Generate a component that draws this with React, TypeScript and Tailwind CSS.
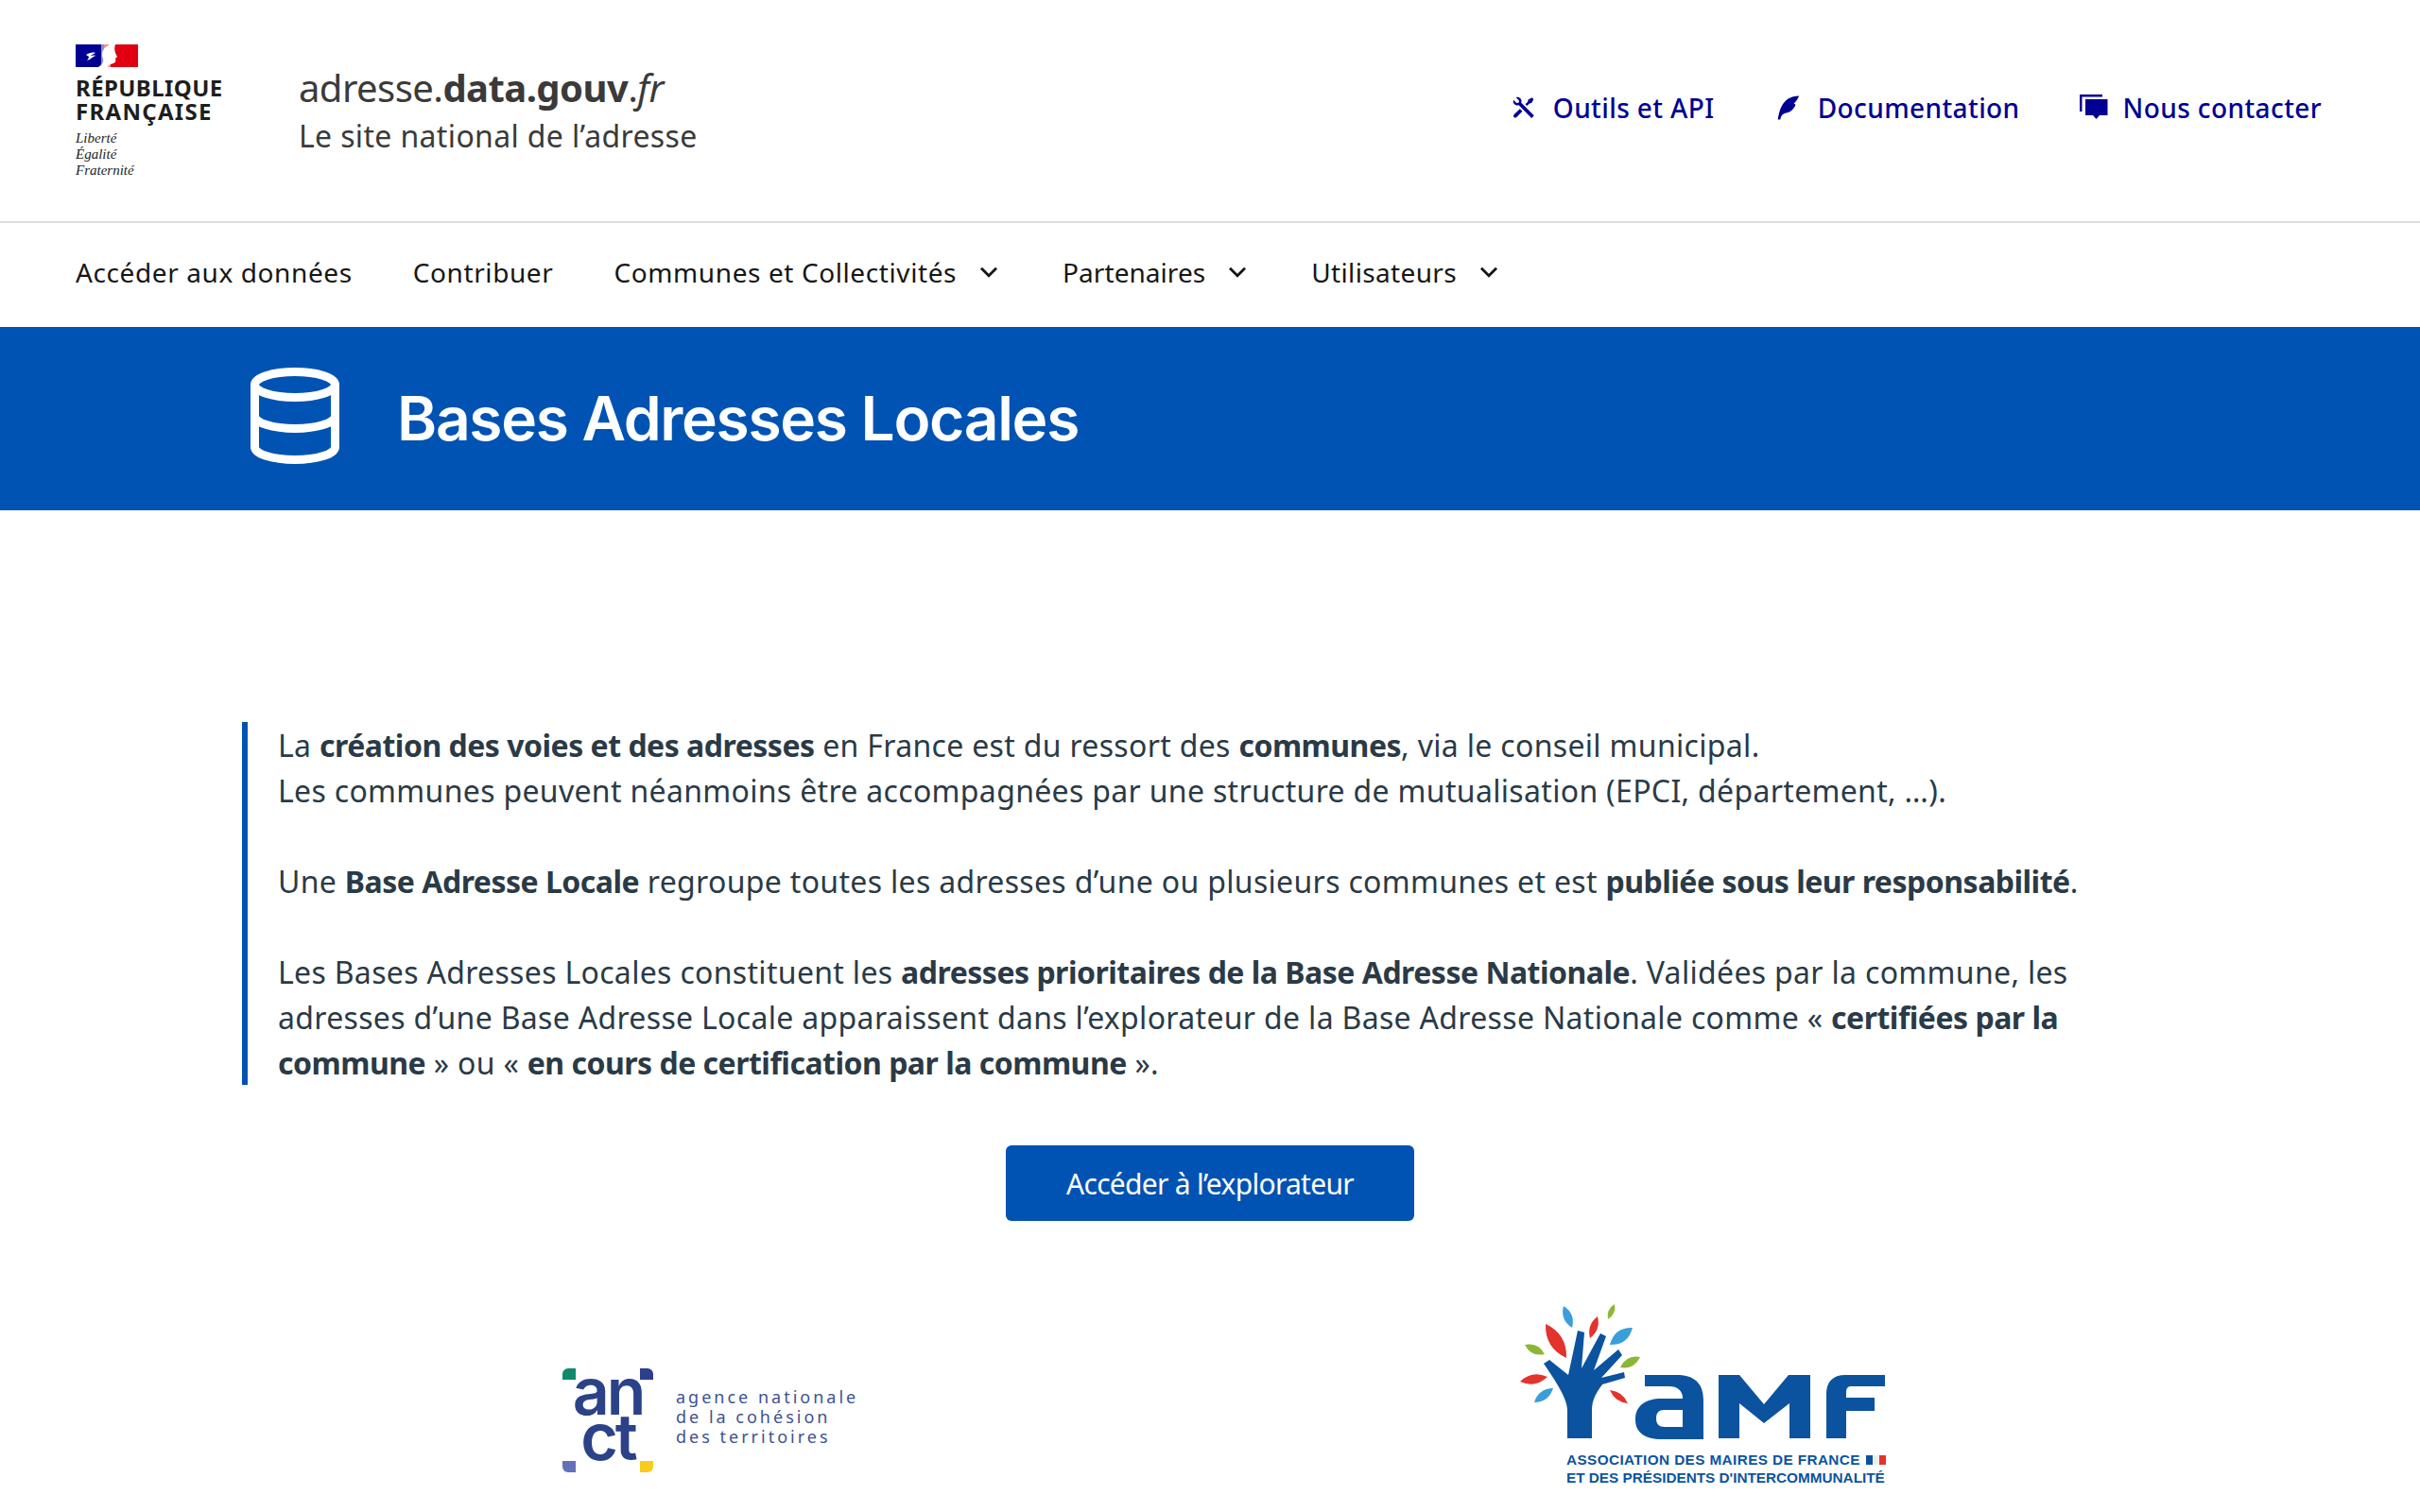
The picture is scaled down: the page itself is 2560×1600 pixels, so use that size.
import React from 'react';
import { RiToolsFill, RiQuillPenFill, RiArrowDownSLine } from 'react-icons/ri';

function FranceLogo() {
    return (
        <div className="mt-[2px] flex w-[160px] flex-col">
            <svg className="h-6 w-[66px]" viewBox="0 0 66 24">
                <rect width="66" height="24" fill="#e1000f" />
                <rect width="30" height="24" fill="#000091" />
                {/* white bust between the two colours */}
                <path d="M24 24c4-3 6-5 5-9-2-4-1-10 4-13l3-2h6c-1 3-1 6 0 9l2 4-2 2c1 3 0 4-2 5l-3 1c-1 1-3 1-3 3z" fill="#fff" />
                <path d="M27 0h10v24h-10z" fill="#fff" opacity="0.55" />
                <path d="M11 11c3-2 7-3 10-2-2 1-4 2-5 3 2 0 4-1 5 0-3 1-5 4-9 5 1-1 2-3 2-4z" fill="#fff" />
            </svg>
            <div className="mt-[9px] font-['Noto_Sans',sans-serif] text-[24px] leading-[25px] font-bold text-[#1e1e1e]">
                <div className="tracking-[0.4px]">RÉPUBLIQUE</div>
                <div className="tracking-[1.3px]">FRANÇAISE</div>
            </div>
            <div className="mt-[8px] font-['Liberation_Serif',serif] text-[15px] leading-[17px] italic text-[#1e1e1e]">
                Liberté
                <br />
                Égalité
                <br />
                Fraternité
            </div>
        </div>
    );
}

function ChatIcon() {
    return (
        <svg className="h-[30px] w-[30px]" viewBox="0 0 30 30" fill="#000091">
            <path d="M0 1h24v2.5H2.5V19H0z" />
            <path d="M6 6h23.5v17H21l-3.5 4-3.5-4H6z" />
        </svg>
    );
}

function DatabaseIcon() {
    return (
        <svg className="mb-[6px] h-[102px] w-[94px]" viewBox="0 0 94 102" fill="none" stroke="#fff" strokeWidth="9">
            <ellipse cx="47" cy="18" rx="42.5" ry="13.5" />
            <path d="M4.5 18v66c0 7.5 19 13.5 42.5 13.5s42.5-6 42.5-13.5V18" />
            <path d="M4.5 51c0 7.5 19 13.5 42.5 13.5s42.5-6 42.5-13.5" />
        </svg>
    );
}

function TopLink({ icon, label }: { icon: React.ReactNode; label: string }) {
    return (
        <a className="flex items-center gap-[16px] text-[28px] font-medium tracking-[0.4px] text-[#000091]">
            {icon}
            {label}
        </a>
    );
}

function NavItem({ label, caret, className }: { label: string; caret?: boolean; className: string }) {
    return (
        <a className={`flex items-center gap-[17px] text-[28px] text-[#161616] ${className}`}>
            {label}
            {caret && <RiArrowDownSLine className="-mr-[3px] h-[34px] w-[34px]" />}
        </a>
    );
}

function AnctLogo() {
    return (
        <div className="flex w-[313px] items-center gap-[24px]">
            <div className="relative h-[110px] w-[96px] shrink-0">
                <span className="absolute top-0 left-0 h-[12px] w-[14px] rounded-tl-[6px] bg-[#0f8a6e]" />
                <span className="absolute top-0 right-0 h-[12px] w-[14px] rounded-tr-[6px] bg-[#2b3f8c]" />
                <span className="absolute bottom-0 left-0 h-[12px] w-[14px] rounded-bl-[6px] bg-[#6471b8]" />
                <span className="absolute right-0 bottom-0 h-[12px] w-[14px] rounded-br-[6px] bg-[#f7cc1d]" />
                <div className="absolute inset-x-0 top-0 text-center font-['Inter',sans-serif] text-[68px] leading-[48px] font-semibold tracking-[-3px] text-[#2b4288]">
                    an
                    <br />
                    ct
                </div>
            </div>
            <div className="mb-[8px] font-['Noto_Sans',sans-serif] text-[18px] leading-[21px] tracking-[3px] whitespace-nowrap text-[#3e5290]">
                agence nationale
                <br />
                de la cohésion
                <br />
                des territoires
            </div>
        </div>
    );
}

// leaf shape between two tips, w = bulge on each side
function leaf(x1: number, y1: number, x2: number, y2: number, w: number) {
    const mx = (x1 + x2) / 2;
    const my = (y1 + y2) / 2;
    const dx = x2 - x1;
    const dy = y2 - y1;
    const len = Math.hypot(dx, dy);
    const nx = (-dy / len) * w;
    const ny = (dx / len) * w;
    return `M${x1} ${y1}Q${mx + nx} ${my + ny} ${x2} ${y2}Q${mx - nx} ${my - ny} ${x1} ${y1}Z`;
}

function AmfLogo() {
    const leaves: [number, number, number, number, number, string][] = [
        [46, 2, 55, 25, 9, '#3a9fd9'],
        [100, 0, 93, 16, 6, '#8ab834'],
        [27, 21, 49, 57, 14, '#e2332c'],
        [82, 13, 74, 36, 8, '#e2332c'],
        [119, 25, 95, 43, 12, '#3a9fd9'],
        [5, 43, 26, 53, 9, '#8ab834'],
        [127, 56, 106, 67, 9, '#8ab834'],
        [0, 82, 29, 77, 10, '#e2332c'],
        [35, 89, 15, 104, 9, '#3a9fd9'],
        [95, 91, 114, 105, 7, '#e2332c'],
    ];
    return (
        <div className="relative h-[188px] w-[386px]">
            <svg className="absolute top-0 left-0 h-[148px] w-[386px]" viewBox="0 0 386 148" fill="#0b539f">
                {leaves.map(([x1, y1, x2, y2, w, c]) => (
                    <path key={`${x1}-${y1}`} d={leaf(x1, y1, x2, y2, w)} fill={c} />
                ))}
                <path d="M25 63L31 59L51 75L61 28L68 30L65 68L85 31L91 34L78 70L104 48L108 54L86 78L110 72L111 78L87 85C82 92 76 100 76 112V142H50V112C50 100 38 82 25 63Z" />
                <path
                    fillRule="evenodd"
                    d="M132 75H166C185 75 194 84 194 102V143H150C132 143 122 136 122 122C122 108 132 100 150 100H172C172 91 166 87 158 87H132ZM172 112H152C146 112 144 116 144 121C144 127 147 130 153 130H172Z"
                />
                <path d="M210 75H232L258 106L284 75H307V142H285V105L258 126L232 105V142H210Z" />
                <path d="M324 142V95C324 82 331 75 344 75H386V87H350C346 87 345 90 345 94V99H375V113H345V142Z" />
            </svg>
            <div className="absolute top-[155px] left-[49px] font-['Liberation_Sans',sans-serif] text-[15.3px] leading-[19px] font-bold whitespace-nowrap text-[#0b539f]">
                <div className="flex items-center gap-[6px] tracking-[0.4px]">
                    ASSOCIATION DES MAIRES DE FRANCE
                    <span className="flex">
                        <span className="h-[10px] w-[7px] bg-[#0b539f]" />
                        <span className="h-[10px] w-[7px] bg-[#eee]" />
                        <span className="h-[10px] w-[7px] bg-[#e2332c]" />
                    </span>
                </div>
                <div>ET DES PRÉSIDENTS D'INTERCOMMUNALITÉ</div>
            </div>
        </div>
    );
}

function Strong({ children }: { children: React.ReactNode }) {
    return <b className="tracking-[-0.5px]">{children}</b>;
}

export default function App() {
    return (
        <div className="h-[1600px] overflow-hidden bg-white font-['Noto_Sans',sans-serif]">
            <header className="flex h-[236px] items-center justify-between border-b-2 border-[#dddddd] pr-[104px] pl-[80px]">
                <div className="flex items-center">
                    <FranceLogo />
                    <div className="ml-[76px] text-[#3a3a3a]">
                        <div className="text-[40px] leading-[52px] tracking-[-0.57px]">
                            adresse.<b>data.gouv</b>.<i>fr</i>
                        </div>
                        <div className="mt-[1px] text-[32px] leading-[48px] tracking-[0.35px]">Le site national de l’adresse</div>
                    </div>
                </div>
                <nav className="flex items-center gap-[63px] pb-[6px]">
                    <TopLink icon={<RiToolsFill className="h-[30px] w-[30px]" />} label="Outils et API" />
                    <TopLink icon={<RiQuillPenFill className="h-[30px] w-[30px]" />} label="Documentation" />
                    <TopLink icon={<ChatIcon />} label="Nous contacter" />
                </nav>
            </header>

            <nav className="flex h-[110px] items-center gap-[64px] pb-[6px] pl-[80px]">
                <NavItem label="Accéder aux données" className="tracking-[0.6px]" />
                <NavItem label="Contribuer" className="tracking-[0.6px]" />
                <NavItem label="Communes et Collectivités" caret className="tracking-[0.6px]" />
                <NavItem label="Partenaires" caret className="tracking-[0.05px]" />
                <NavItem label="Utilisateurs" caret className="tracking-[0.35px]" />
            </nav>

            <div className="flex h-[194px] items-center gap-[61px] bg-[#0053b3] pl-[265px]">
                <DatabaseIcon />
                <h1 className="font-['Inter',sans-serif] text-[64px] font-semibold tracking-[-1.3px] text-white">
                    Bases Adresses Locales
                </h1>
            </div>

            <main className="px-[256px] pt-[224px]">
                <blockquote className="h-[384px] border-l-[6px] border-[#0053b3] pt-[1px] pl-[32px] text-[32px] leading-[48px] tracking-[0.32px] text-[#2a3a47]">
                    La <Strong>création des voies et des adresses</Strong> en France est du ressort des <Strong>communes</Strong>, via le conseil municipal.
                    <br />
                    Les communes peuvent néanmoins être accompagnées par une structure de mutualisation (EPCI, département, …).
                    <br />
                    <br />
                    Une <Strong>Base Adresse Locale</Strong> regroupe toutes les adresses d’une ou plusieurs communes et est <Strong>publiée sous leur responsabilité</Strong>.
                    <br />
                    <br />
                    Les Bases Adresses Locales constituent les <Strong>adresses prioritaires de la Base Adresse Nationale</Strong>. Validées par la commune, les adresses d’une Base Adresse Locale apparaissent dans l’explorateur de la Base Adresse Nationale comme « <Strong>certifiées par la commune</Strong> » ou « <Strong>en cours de certification par la commune</Strong> ».
                </blockquote>

                <div className="mt-[64px] flex justify-center">
                    <a className="flex h-[80px] w-[432px] items-center justify-center rounded-[6px] bg-[#0053b3] text-[30px] tracking-[-0.7px] text-white">
                        Accéder à l’explorateur
                    </a>
                </div>

                <div className="mt-[88px] flex items-start">
                    <div className="mt-[68px] ml-[339px]">
                        <AnctLogo />
                    </div>
                    <div className="ml-[700px]">
                        <AmfLogo />
                    </div>
                </div>
            </main>
        </div>
    );
}
